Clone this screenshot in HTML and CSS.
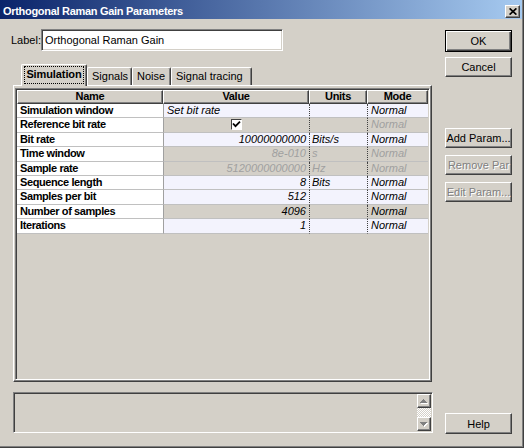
FILE: index.html
```html
<!DOCTYPE html>
<html>
<head>
<meta charset="utf-8">
<title>Orthogonal Raman Gain Parameters</title>
<link rel="stylesheet" href="styles.css">
</head>
<body>
<div class="dialog">
  <div class="titlebar">
    <span class="title">Orthogonal Raman Gain Parameters</span>
    <span class="close"><svg width="8" height="7" viewBox="0 0 8 7"><path d="M0.6 0.4 L7.4 6.6 M7.4 0.4 L0.6 6.6" stroke="#000" stroke-width="1.7"/></svg></span>
  </div>
  <div class="content">
    <div class="main">
      <div class="label-row">
        <span class="label-text">Label:</span>
        <div class="textbox">Orthogonal Raman Gain</div>
      </div>
      <div class="tabs">
        <div class="tab active"><span class="focus">Simulation</span></div>
        <div class="tab w-signals">Signals</div>
        <div class="tab w-noise">Noise</div>
        <div class="tab w-tracing">Signal tracing</div>
      </div>
      <div class="panel">
        <div class="grid">
          <div class="row head">
            <div class="hc">Name</div>
            <div class="hc">Value</div>
            <div class="hc">Units</div>
            <div class="hc">Mode</div>
          </div>
          <div class="row lt">
            <div class="nc">Simulation window</div>
            <div class="vc left">Set bit rate</div>
            <div class="uc"></div>
            <div class="mc">Normal</div>
          </div>
          <div class="row ro">
            <div class="nc">Reference bit rate</div>
            <div class="vc center"><span class="chk"><svg width="9" height="9" viewBox="0 0 9 9"><path d="M1 3.5 L3.5 6.2 L8 1.6" stroke="#000" stroke-width="1.8" fill="none"/></svg></span></div>
            <div class="uc"></div>
            <div class="mc dis">Normal</div>
          </div>
          <div class="row lt">
            <div class="nc">Bit rate</div>
            <div class="vc">10000000000</div>
            <div class="uc">Bits/s</div>
            <div class="mc">Normal</div>
          </div>
          <div class="row ro">
            <div class="nc">Time window</div>
            <div class="vc dis">8e-010</div>
            <div class="uc dis">s</div>
            <div class="mc dis">Normal</div>
          </div>
          <div class="row ro">
            <div class="nc">Sample rate</div>
            <div class="vc dis">5120000000000</div>
            <div class="uc dis">Hz</div>
            <div class="mc dis">Normal</div>
          </div>
          <div class="row lt">
            <div class="nc">Sequence length</div>
            <div class="vc">8</div>
            <div class="uc">Bits</div>
            <div class="mc">Normal</div>
          </div>
          <div class="row lt">
            <div class="nc">Samples per bit</div>
            <div class="vc">512</div>
            <div class="uc"></div>
            <div class="mc">Normal</div>
          </div>
          <div class="row ro">
            <div class="nc">Number of samples</div>
            <div class="vc">4096</div>
            <div class="uc"></div>
            <div class="mc">Normal</div>
          </div>
          <div class="row lt">
            <div class="nc">Iterations</div>
            <div class="vc">1</div>
            <div class="uc"></div>
            <div class="mc">Normal</div>
          </div>
        </div>
      </div>
      <div class="msgbox">
        <div class="vscroll">
          <div class="sbtn"><svg width="8" height="5" viewBox="0 0 8 5"><path d="M4 1h1v1h1v1h1v1h1v1H1v-1h1v-1h1v-1h1z" fill="#fff"/><path d="M3 0h1v1h1v1h1v1h1v1H0v-1h1v-1h1v-1h1z" fill="#808080"/></svg></div>
          <div class="track"></div>
          <div class="sbtn"><svg width="8" height="5" viewBox="0 0 8 5"><path d="M1 1h7v1h-1v1h-1v1h-1v1h-1v-1h-1v-1h-1v-1h-1z" fill="#fff"/><path d="M0 0h7v1h-1v1h-1v1h-1v1h-1v-1h-1v-1h-1v-1h-1z" fill="#808080"/></svg></div>
        </div>
      </div>
    </div>
    <div class="side">
      <div class="btn default ok">OK</div>
      <div class="btn cancel">Cancel</div>
      <div class="btn add">Add Param...</div>
      <div class="btn disabled remove">Remove Par</div>
      <div class="btn disabled edit">Edit Param...</div>
      <div class="btn help">Help</div>
    </div>
  </div>
</div>
</body>
</html>
```
FILE: styles.css
```css
* { box-sizing: border-box; margin: 0; padding: 0; }
html, body { width: 524px; height: 448px; overflow: hidden; }
body {
  background: #d4d0c8;
  font-family: "Liberation Sans Narrow", "Liberation Sans", Arial, sans-serif;
  font-size: 11px;
  color: #000;
}
.dialog {
  width: 524px;
  height: 448px;
  display: flex;
  flex-direction: column;
  background: #d4d0c8;
  border-right: 1px solid #404040;
  border-bottom: 1px solid #404040;
  box-shadow: inset -1px -1px 0 #808080;
}
.titlebar {
  height: 19px;
  flex: none;
  display: flex;
  justify-content: space-between;
  align-items: flex-start;
  padding: 0 2px 0 3px;
  margin-right: 1px;
  background: linear-gradient(to right, #0a246a, #a6caf0);
}
.title {
  font-family: "Liberation Sans", Arial, sans-serif;
  font-weight: bold;
  font-size: 11px;
  color: #fff;
  line-height: 13px;
  padding-top: 5px;
  letter-spacing: -0.3px;
  white-space: nowrap;
}
.close {
  width: 15px;
  height: 13px;
  margin-top: 5px;
  background: #d4d0c8;
  border: 1px solid;
  border-color: #fff #404040 #404040 #fff;
  box-shadow: inset -1px -1px 0 #808080;
  display: flex;
  align-items: center;
  justify-content: center;
}
.content { flex: 1; display: flex; }
.main {
  width: 434px;
  padding-left: 13px;
  display: flex;
  flex-direction: column;
}
.label-row {
  display: flex;
  align-items: center;
  height: 22px;
  margin: 10px 0 0 -2px;
}
.label-text { width: 30px; }
.textbox {
  width: 242px;
  height: 22px;
  background: #fff;
  border: 1px solid;
  border-color: #808080 #fff #fff #808080;
  box-shadow: inset 1px 1px 0 #404040, inset -1px -1px 0 #d4d0c8;
  padding-left: 3px;
  line-height: 20px;
  white-space: nowrap;
}
.tabs {
  display: flex;
  align-items: flex-end;
  height: 20px;
  margin-top: 14px;
  padding-left: 8px;
}
.tab {
  height: 18px;
  background: #d4d0c8;
  border-top: 1px solid #fff;
  border-left: 1px solid #fff;
  border-right: 1px solid #404040;
  border-radius: 2px 2px 0 0;
  box-shadow: inset -1px 0 0 #808080;
  padding: 2px 0 0 4px;
  line-height: 13px;
  white-space: nowrap;
}
.tab.active {
  width: 66px;
  height: 22px;
  margin-bottom: -1px;
  position: relative;
  z-index: 1;
  padding: 1px 2px 2px 2px;
  font-family: "Liberation Sans", Arial, sans-serif;
  font-weight: bold;
  letter-spacing: -0.1px;
}
.focus {
  display: block;
  height: 100%;
  border: 1px dotted #000;
  text-align: center;
  line-height: 15px;
}
.w-signals { width: 45px; }
.w-noise { width: 39px; }
.w-tracing { width: 81px; }
.panel {
  width: 419px;
  height: 297px;
  flex: none;
  display: flex;
  background: #d4d0c8;
  border-top: 1px solid #fff;
  border-left: 1px solid #fff;
  border-right: 1px solid #404040;
  border-bottom: 1px solid #404040;
  box-shadow: inset -1px -1px 0 #808080;
  padding: 2px 1px 1px 1px;
}
.grid {
  flex: 1;
  background: #d4d0c8;
  border: 1px solid;
  border-color: #808080 #fff #fff #808080;
  box-shadow: inset 1px 1px 0 #404040, inset -1px -1px 0 #d4d0c8;
  padding: 1px;
}
.row {
  display: grid;
  grid-template-columns: 146px 146px 58px 61px;
  height: 14.4px;
}
.row > div {
  border-bottom: 1px solid #c0c0c0;
  line-height: 13px;
  overflow: hidden;
  white-space: nowrap;
}
.row.head { height: 14px; }
.row.head > .hc {
  background: #d4d0c8;
  border-top: 1px solid #fff;
  border-left: 1px solid #fff;
  border-right: 1px solid #404040;
  border-bottom: 1px solid #404040;
  box-shadow: inset -1px -1px 0 #808080;
  font-family: "Liberation Sans", Arial, sans-serif;
  font-weight: bold;
  letter-spacing: -0.3px;
  text-align: center;
  line-height: 11px;
}
.nc {
  background: #fff;
  font-family: "Liberation Sans", Arial, sans-serif;
  font-weight: bold;
  letter-spacing: -0.4px;
  padding-left: 3px;
}
.vc {
  border-left: 1px solid #a0a0a0;
  font-style: italic;
  text-align: right;
  padding-right: 3px;
}
.vc.left { text-align: left; padding-left: 3px; }
.vc.center { text-align: center; padding-right: 0; }
.uc {
  border-left: 1px dotted #404040;
  font-style: italic;
  padding-left: 2px;
}
.mc {
  border-left: 1px dotted #404040;
  font-style: italic;
  padding-left: 3px;
}
.lt > .vc, .lt > .uc, .lt > .mc { background: #f3f3fd; }
.ro > .vc, .ro > .uc, .ro > .mc { background: #d4d0c8; }
.dis { color: #a0a0a0; }
.chk {
  display: inline-block;
  width: 11px;
  height: 11px;
  margin-top: 1px;
  vertical-align: top;
  background: #fff;
  border: 1px solid;
  border-color: #404040 #fff #fff #404040;
  line-height: 0;
}
.msgbox {
  width: 420px;
  height: 41px;
  flex: none;
  margin-top: 10px;
  border: 1px solid;
  border-color: #808080 #fff #fff #808080;
  box-shadow: inset 1px 1px 0 #404040, inset -1px -1px 0 #d4d0c8;
  padding: 1px;
  display: flex;
  justify-content: flex-end;
}
.vscroll {
  width: 14px;
  display: flex;
  flex-direction: column;
}
.sbtn {
  height: 14px;
  flex: none;
  background: #d4d0c8;
  border: 1px solid;
  border-color: #fff #404040 #404040 #fff;
  box-shadow: inset -1px -1px 0 #808080;
  display: flex;
  align-items: center;
  justify-content: center;
}
.track {
  flex: 1;
  background-color: #d4d0c8;
  background-image: conic-gradient(#fff 25%, #d4d0c8 0 50%, #fff 0 75%, #d4d0c8 0);
  background-size: 2px 2px;
}
.side {
  width: 67px;
  margin-left: 11px;
  display: flex;
  flex-direction: column;
}
.btn {
  height: 20px;
  flex: none;
  background: #d4d0c8;
  border: 1px solid;
  border-color: #fff #404040 #404040 #fff;
  box-shadow: inset -1px -1px 0 #808080;
  display: flex;
  align-items: center;
  justify-content: center;
  white-space: nowrap;
}
.btn.default {
  height: 22px;
  border: 1px solid #000;
  box-shadow: inset 1px 1px 0 #fff, inset -1px -1px 0 #404040, inset -2px -2px 0 #808080;
}
.btn.disabled { color: #808080; text-shadow: 1px 1px 0 #fff; }
.ok { margin-top: 11px; }
.cancel { margin-top: 5px; }
.add { margin-top: 51px; }
.remove { margin-top: 7px; }
.edit { margin-top: 7px; }
.help { margin-top: 211px; height: 21px; }
```
